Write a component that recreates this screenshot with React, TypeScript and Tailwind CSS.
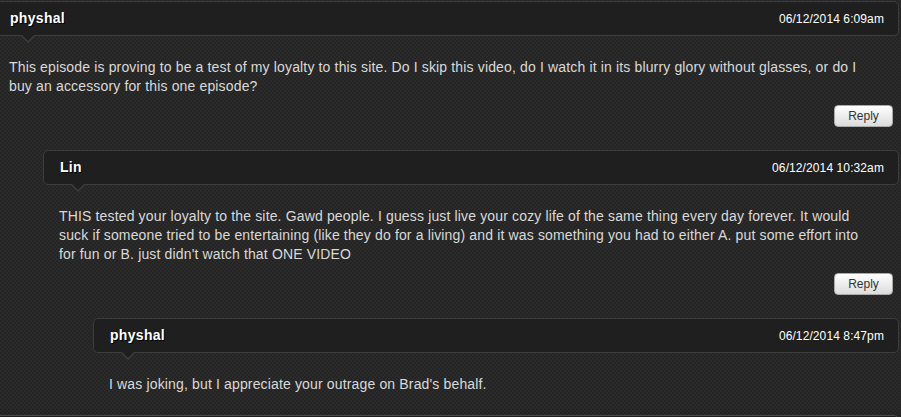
import React from "react";

type C = { name: string; date: string; lines: string[]; reply: boolean; children?: C[] };

const data: C[] = [
  {
    name: "physhal",
    date: "06/12/2014 6:09am",
    lines: [
      "This episode is proving to be a test of my loyalty to this site. Do I skip this video, do I watch it in its blurry glory without glasses, or do I",
      "buy an accessory for this one episode?",
    ],
    reply: true,
    children: [
      {
        name: "Lin",
        date: "06/12/2014 10:32am",
        lines: [
          "THIS tested your loyalty to the site. Gawd people. I guess just live your cozy life of the same thing every day forever. It would",
          "suck if someone tried to be entertaining (like they do for a living) and it was something you had to either A. put some effort into",
          "for fun or B. just didn't watch that ONE VIDEO",
        ],
        reply: true,
        children: [
          {
            name: "physhal",
            date: "06/12/2014 8:47pm",
            lines: ["I was joking, but I appreciate your outrage on Brad's behalf."],
            reply: false,
          },
        ],
      },
    ],
  },
];

function Header({ name, date }: { name: string; date: string }) {
  return (
    <div className="relative h-[35px] rounded-[5px] border border-[#3d3d3d] bg-[#1f1f1f] flex items-center justify-between pl-4 pr-[14px]">
      <span className="text-[14px] font-bold tracking-[0.3px] text-white [text-shadow:1px_1px_0_#000]">{name}</span>
      <span className="text-[12px] tracking-[0.1px] text-white">{date}</span>
      <div className="absolute left-[26px] top-full w-0 h-0 border-x-[8px] border-x-transparent border-t-[8px] border-t-[#3d3d3d]" />
      <div className="absolute left-[27px] top-[calc(100%-1px)] w-0 h-0 border-x-[7px] border-x-transparent border-t-[7px] border-t-[#1f1f1f]" />
    </div>
  );
}

function Comment({ c }: { c: C }) {
  return (
    <div>
      <Header name={c.name} date={c.date} />
      <p className="mt-[22px] pl-4 text-[14px] leading-[19px] tracking-[0.15px] text-[#dadada]">
        {c.lines.map((l, i) => (
          <span key={i} className="block whitespace-nowrap">
            {l}
          </span>
        ))}
      </p>
      {c.reply && (
        <div className="mt-[9px] flex justify-end pr-[6px]">
          <button className="h-[22px] w-[59px] rounded-[4px] border border-[#aaa] bg-gradient-to-b from-white to-[#dcdcdc] text-[12px] text-[#333] leading-none">
            Reply
          </button>
        </div>
      )}
      {c.children && (
        <div className="ml-[50px] mt-[23px]">
          {c.children.map((ch, i) => (
            <Comment key={i} c={ch} />
          ))}
        </div>
      )}
    </div>
  );
}

export default function App() {
  return (
    <div
      className="w-[901px] h-[417px] overflow-hidden bg-[#282828] bg-[repeating-conic-gradient(#2b2b2b_0_25%,#242424_0_50%)] bg-[length:4px_4px] pt-px"
      style={{ fontFamily: '"Liberation Sans", Arial, sans-serif' }}
    >
      <div className="ml-[-7px] w-[906px]">
        {data.map((c, i) => (
          <Comment key={i} c={c} />
        ))}
        <div className="mt-[21px] h-[35px] rounded-[5px] border border-[#4a4a4a] bg-[#1f1f1f]" />
      </div>
    </div>
  );
}
